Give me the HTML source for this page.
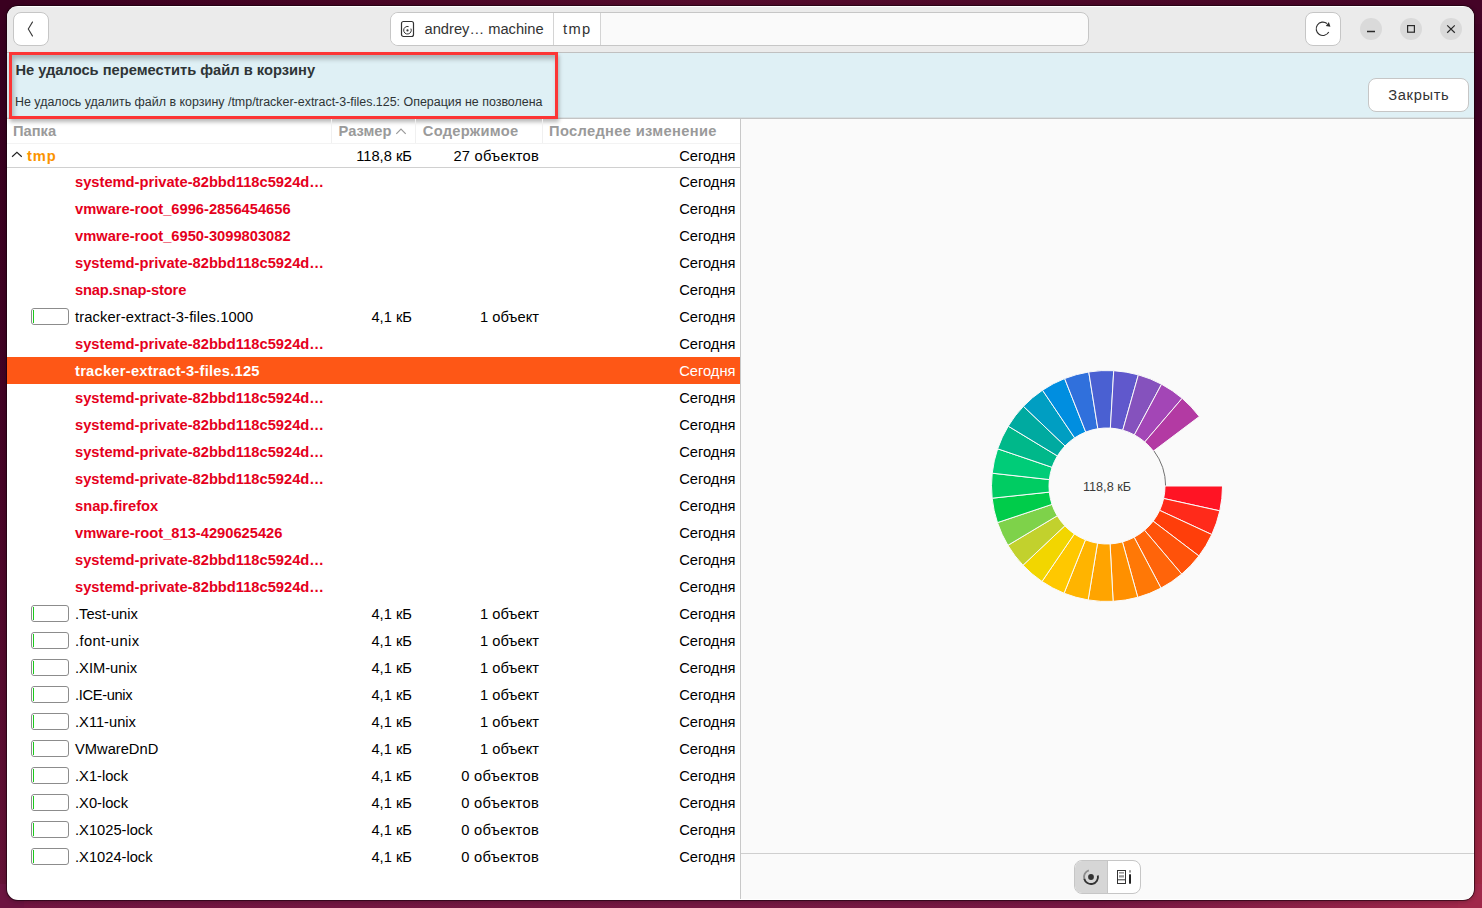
<!DOCTYPE html>
<html><head><meta charset="utf-8">
<style>
*{box-sizing:border-box}
html,body{margin:0;padding:0}
body{width:1482px;height:908px;overflow:hidden;position:relative;font-family:"Liberation Sans",sans-serif;
background:#460426}
.bg{position:absolute}
#win{position:absolute;left:7px;top:6px;width:1467px;height:894px;border-radius:11px;overflow:hidden;background:#fff;box-shadow:0 0 0 1px rgba(20,0,10,0.55),0 1px 4px 1px rgba(0,0,0,0.22)}
#pg{position:absolute;left:-7px;top:-6px;width:1482px;height:908px}
.a{position:absolute}
.t{position:absolute;white-space:nowrap;font-size:14.7px;line-height:17px;color:#000}
.red{color:#e5001c;font-weight:bold}
.sel{color:#fff;font-weight:bold}
.gh{color:#9a9a9a;font-weight:bold}
.btn{position:absolute;background:#fff;border:1px solid #c6c6c6;border-radius:8px}
.wc{position:absolute;width:22px;height:22px;border-radius:50%;background:#dadada}
.pb{position:absolute;left:31px;width:38px;height:17px;border:1px solid #8c8c8c;border-radius:3px;background:#fff}
.pb i{position:absolute;left:1px;top:1px;width:1px;height:13px;background:#1cc81c}
</style></head><body>
<div class="bg" style="left:0;top:0;width:1482px;height:7px;background:linear-gradient(90deg,#3a0020 0%,#460424 20%,#540b2c 47%,#4c0828 74%,#450427 100%)"></div>
<div class="bg" style="left:0;top:899px;width:1482px;height:9px;background:linear-gradient(90deg,#711540 0%,#751942 47%,#771843 74%,#a0284a 100%)"></div>
<div class="bg" style="left:0;top:0;width:8px;height:908px;background:linear-gradient(180deg,#3a0020 0%,#36001e 11%,#460426 53%,#641236 97%,#711540 100%)"></div>
<div class="bg" style="left:1474px;top:0;width:8px;height:908px;background:linear-gradient(180deg,#450427 0%,#3b0022 11%,#741538 53%,#9e2742 97%,#a0284a 100%)"></div>
<div class="bg" style="left:0;top:0;width:24px;height:24px;background:#3a0020"></div>
<div class="bg" style="left:1458px;top:0;width:24px;height:24px;background:#450427"></div>
<div class="bg" style="left:0;top:884px;width:24px;height:24px;background:#6c1440"></div>
<div class="bg" style="left:1458px;top:884px;width:24px;height:24px;background:#a0284a"></div>
<div id="win"><div id="pg">

<div class="a" style="left:0;top:7px;width:1482px;height:45px;background:#ebebeb"></div>
<div class="a" style="left:0;top:52px;width:1482px;height:1px;background:#c0c0c0"></div>
<div class="btn" style="left:13px;top:12px;width:36px;height:34px"></div>
<svg class="a" style="left:0;top:0" width="60" height="60"><path d="M32.7 21.6 L28.3 29 L32.7 36.4" fill="none" stroke="#3c3c3c" stroke-width="1.1"/></svg>
<div class="btn" style="left:390px;top:12px;width:699px;height:34px;background:#fafafa;overflow:hidden"><div class="a" style="left:0;top:0;width:210px;height:34px;background:#fff;border-right:1px solid #d4d4d4"></div><div class="a" style="left:162px;top:0;width:1px;height:34px;background:#d4d4d4"></div></div>
<svg class="a" style="left:400px;top:20px" width="16" height="18"><rect x="1.5" y="1.5" width="12" height="15" rx="2" fill="none" stroke="#333" stroke-width="1.2"/><path d="M10.9 8.6 A3.8 3.8 0 1 1 8.6 6.6" fill="none" stroke="#333" stroke-width="1"/><circle cx="7.5" cy="10.4" r="1.1" fill="#333"/></svg>
<div class="t " style="left:424.5px;top:21px;color:#333">andrey… machine</div>
<div class="t " style="left:563px;top:21px;color:#333;letter-spacing:1.3px">tmp</div>
<div class="btn" style="left:1305px;top:12px;width:36px;height:34px"></div>
<svg class="a" style="left:1310px;top:17px" width="26" height="24"><path d="M18.76 15.05 A6.7 6.7 0 1 1 17.0 6.5" fill="none" stroke="#2e2e2e" stroke-width="1.15"/><path d="M15.8 8.9 L18.9 5.0 L20.4 9.7 Z" fill="#2e2e2e"/></svg>
<div class="wc" style="left:1360px;top:18px"></div>
<div class="wc" style="left:1400px;top:18px"></div>
<div class="wc" style="left:1440px;top:18px"></div>
<svg class="a" style="left:1360px;top:18px" width="102" height="22"><path d="M7 13.5 H15" stroke="#2a2a2a" stroke-width="1.3"/><rect x="47.6" y="7.6" width="6.8" height="6.6" fill="none" stroke="#2a2a2a" stroke-width="1.2"/><path d="M87.2 7.4 L94.8 14.8 M94.8 7.4 L87.2 14.8" stroke="#2a2a2a" stroke-width="1.2"/></svg>
<div class="a" style="left:0;top:53px;width:1482px;height:65px;background:#dff0f5"></div>
<div class="a" style="left:0;top:118px;width:1482px;height:1px;background:#c4c4c4"></div>
<div class="a" style="left:0;top:117px;width:1482px;height:1px;background:#d6e0e3"></div>
<div class="t " style="left:15.4px;top:62px;font-weight:bold;color:#2e3436">Не удалось переместить файл в корзину</div>
<div class="t" style="left:15px;top:95px;font-size:12.45px;line-height:14px;color:#2e3436">Не удалось удалить файл в корзину /tmp/tracker-extract-3-files.125: Операция не позволена</div>
<div class="btn" style="left:1368px;top:78px;width:101px;height:34px"></div>
<div class="t" style="left:1368px;top:87px;width:101px;text-align:center;color:#333;letter-spacing:0.65px;text-indent:0.65px">Закрыть</div>
<div class="a" style="left:9px;top:52px;width:549px;height:67px;border:3px solid #fc3535;box-shadow:inset 2px 4px 5px rgba(0,0,0,0.25), 1px 3px 4px rgba(0,0,0,0.28)"></div>
<div class="a" style="left:740px;top:119px;width:1px;height:780px;background:#c8c8c8"></div>
<div class="a" style="left:741px;top:119px;width:732px;height:780px;background:#fafafa"></div>
<div class="t gh" style="left:13px;top:123px;">Папка</div>
<div class="t gh" style="left:338.6px;top:123px;">Размер</div>
<svg class="a" style="left:394px;top:124px" width="14" height="12"><path d="M2.3 9.8 L7 5 L11.7 9.8" fill="none" stroke="#9a9a9a" stroke-width="1.2"/></svg>
<div class="t gh" style="left:422.8px;top:123px;letter-spacing:0.28px">Содержимое</div>
<div class="t gh" style="left:549px;top:123px;letter-spacing:0.33px">Последнее изменение</div>
<div class="a" style="left:331px;top:119px;width:1px;height:24px;background:#f0f0f0"></div>
<div class="a" style="left:415px;top:119px;width:1px;height:24px;background:#f0f0f0"></div>
<div class="a" style="left:542px;top:119px;width:1px;height:24px;background:#f0f0f0"></div>
<div class="a" style="left:7px;top:143px;width:733px;height:1px;background:#f3f3f3"></div>
<svg class="a" style="left:8px;top:148px" width="18" height="14"><path d="M4.06 8.75 L8.92 4.3 L13.78 8.75" fill="none" stroke="#222" stroke-width="1.15"/></svg>
<div class="t " style="left:27px;top:148px;color:#fb9400;font-weight:bold;letter-spacing:0.9px">tmp</div>
<div class="t " style="right:1070px;top:148px;">118,8 кБ</div>
<div class="t " style="right:943px;top:148px;letter-spacing:0.24px">27 объектов</div>
<div class="t " style="right:746.5px;top:148px;">Сегодня</div>
<div class="a" style="left:7px;top:167px;width:733px;height:1px;background:#d0d0d0"></div>
<div class="t red" style="left:75px;top:173.5px;">systemd-private-82bbd118c5924d…</div>
<div class="t " style="right:746.5px;top:173.5px;">Сегодня</div>
<div class="t red" style="left:75px;top:200.5px;">vmware-root_6996-2856454656</div>
<div class="t " style="right:746.5px;top:200.5px;">Сегодня</div>
<div class="t red" style="left:75px;top:227.5px;">vmware-root_6950-3099803082</div>
<div class="t " style="right:746.5px;top:227.5px;">Сегодня</div>
<div class="t red" style="left:75px;top:254.5px;">systemd-private-82bbd118c5924d…</div>
<div class="t " style="right:746.5px;top:254.5px;">Сегодня</div>
<div class="t red" style="left:75px;top:281.5px;letter-spacing:-0.15px">snap.snap-store</div>
<div class="t " style="right:746.5px;top:281.5px;">Сегодня</div>
<div class="pb" style="top:308px"><i></i></div>
<div class="t " style="right:1070px;top:308.5px;">4,1 кБ</div>
<div class="t " style="right:943px;top:308.5px;">1 объект</div>
<div class="t " style="left:75px;top:308.5px;letter-spacing:0.13px">tracker-extract-3-files.1000</div>
<div class="t " style="right:746.5px;top:308.5px;">Сегодня</div>
<div class="t red" style="left:75px;top:335.5px;">systemd-private-82bbd118c5924d…</div>
<div class="t " style="right:746.5px;top:335.5px;">Сегодня</div>
<div class="a" style="left:7px;top:357px;width:733px;height:27px;background:#fe5716"></div>
<div class="t sel" style="left:75px;top:362.5px;letter-spacing:0.25px">tracker-extract-3-files.125</div>
<div class="t " style="right:746.5px;top:362.5px;color:#fff">Сегодня</div>
<div class="t red" style="left:75px;top:389.5px;">systemd-private-82bbd118c5924d…</div>
<div class="t " style="right:746.5px;top:389.5px;">Сегодня</div>
<div class="t red" style="left:75px;top:416.5px;">systemd-private-82bbd118c5924d…</div>
<div class="t " style="right:746.5px;top:416.5px;">Сегодня</div>
<div class="t red" style="left:75px;top:443.5px;">systemd-private-82bbd118c5924d…</div>
<div class="t " style="right:746.5px;top:443.5px;">Сегодня</div>
<div class="t red" style="left:75px;top:470.5px;">systemd-private-82bbd118c5924d…</div>
<div class="t " style="right:746.5px;top:470.5px;">Сегодня</div>
<div class="t red" style="left:75px;top:497.5px;">snap.firefox</div>
<div class="t " style="right:746.5px;top:497.5px;">Сегодня</div>
<div class="t red" style="left:75px;top:524.5px;">vmware-root_813-4290625426</div>
<div class="t " style="right:746.5px;top:524.5px;">Сегодня</div>
<div class="t red" style="left:75px;top:551.5px;">systemd-private-82bbd118c5924d…</div>
<div class="t " style="right:746.5px;top:551.5px;">Сегодня</div>
<div class="t red" style="left:75px;top:578.5px;">systemd-private-82bbd118c5924d…</div>
<div class="t " style="right:746.5px;top:578.5px;">Сегодня</div>
<div class="pb" style="top:605px"><i></i></div>
<div class="t " style="right:1070px;top:605.5px;">4,1 кБ</div>
<div class="t " style="right:943px;top:605.5px;">1 объект</div>
<div class="t " style="left:75px;top:605.5px;">.Test-unix</div>
<div class="t " style="right:746.5px;top:605.5px;">Сегодня</div>
<div class="pb" style="top:632px"><i></i></div>
<div class="t " style="right:1070px;top:632.5px;">4,1 кБ</div>
<div class="t " style="right:943px;top:632.5px;">1 объект</div>
<div class="t " style="left:75px;top:632.5px;letter-spacing:0.4px">.font-unix</div>
<div class="t " style="right:746.5px;top:632.5px;">Сегодня</div>
<div class="pb" style="top:659px"><i></i></div>
<div class="t " style="right:1070px;top:659.5px;">4,1 кБ</div>
<div class="t " style="right:943px;top:659.5px;">1 объект</div>
<div class="t " style="left:75px;top:659.5px;">.XIM-unix</div>
<div class="t " style="right:746.5px;top:659.5px;">Сегодня</div>
<div class="pb" style="top:686px"><i></i></div>
<div class="t " style="right:1070px;top:686.5px;">4,1 кБ</div>
<div class="t " style="right:943px;top:686.5px;">1 объект</div>
<div class="t " style="left:75px;top:686.5px;letter-spacing:-0.35px">.ICE-unix</div>
<div class="t " style="right:746.5px;top:686.5px;">Сегодня</div>
<div class="pb" style="top:713px"><i></i></div>
<div class="t " style="right:1070px;top:713.5px;">4,1 кБ</div>
<div class="t " style="right:943px;top:713.5px;">1 объект</div>
<div class="t " style="left:75px;top:713.5px;">.X11-unix</div>
<div class="t " style="right:746.5px;top:713.5px;">Сегодня</div>
<div class="pb" style="top:740px"><i></i></div>
<div class="t " style="right:1070px;top:740.5px;">4,1 кБ</div>
<div class="t " style="right:943px;top:740.5px;">1 объект</div>
<div class="t " style="left:75px;top:740.5px;">VMwareDnD</div>
<div class="t " style="right:746.5px;top:740.5px;">Сегодня</div>
<div class="pb" style="top:767px"><i></i></div>
<div class="t " style="right:1070px;top:767.5px;">4,1 кБ</div>
<div class="t " style="right:943px;top:767.5px;letter-spacing:0.3px">0 объектов</div>
<div class="t " style="left:75px;top:767.5px;">.X1-lock</div>
<div class="t " style="right:746.5px;top:767.5px;">Сегодня</div>
<div class="pb" style="top:794px"><i></i></div>
<div class="t " style="right:1070px;top:794.5px;">4,1 кБ</div>
<div class="t " style="right:943px;top:794.5px;letter-spacing:0.3px">0 объектов</div>
<div class="t " style="left:75px;top:794.5px;">.X0-lock</div>
<div class="t " style="right:746.5px;top:794.5px;">Сегодня</div>
<div class="pb" style="top:821px"><i></i></div>
<div class="t " style="right:1070px;top:821.5px;">4,1 кБ</div>
<div class="t " style="right:943px;top:821.5px;letter-spacing:0.3px">0 объектов</div>
<div class="t " style="left:75px;top:821.5px;">.X1025-lock</div>
<div class="t " style="right:746.5px;top:821.5px;">Сегодня</div>
<div class="pb" style="top:848px"><i></i></div>
<div class="t " style="right:1070px;top:848.5px;">4,1 кБ</div>
<div class="t " style="right:943px;top:848.5px;letter-spacing:0.3px">0 объектов</div>
<div class="t " style="left:75px;top:848.5px;">.X1024-lock</div>
<div class="t " style="right:746.5px;top:848.5px;">Сегодня</div>
<svg class="a" style="left:741px;top:118px" width="741" height="735"><path d="M412.82 332.76 A58.6 58.6 0 0 1 424.60 368.00" fill="none" stroke="#707070" stroke-width="1"/><path d="M481.50 368.00 A115.5 115.5 0 0 1 478.80 392.85 L422.64 380.48 A58 58 0 0 0 424.00 368.00 Z" fill="#ff1424" stroke="#fafafa" stroke-width="1"/><path d="M478.80 392.85 A115.5 115.5 0 0 1 470.81 416.54 L418.63 392.37 A58 58 0 0 0 422.64 380.48 Z" fill="#ff2a1a" stroke="#fafafa" stroke-width="1"/><path d="M470.81 416.54 A115.5 115.5 0 0 1 457.91 437.95 L412.15 403.13 A58 58 0 0 0 418.63 392.37 Z" fill="#ff3e0a" stroke="#fafafa" stroke-width="1"/><path d="M457.91 437.95 A115.5 115.5 0 0 1 440.71 456.08 L403.52 412.23 A58 58 0 0 0 412.15 403.13 Z" fill="#ff520a" stroke="#fafafa" stroke-width="1"/><path d="M440.71 456.08 A115.5 115.5 0 0 1 420.01 470.09 L393.12 419.27 A58 58 0 0 0 403.52 412.23 Z" fill="#ff640a" stroke="#fafafa" stroke-width="1"/><path d="M420.01 470.09 A115.5 115.5 0 0 1 396.78 479.32 L381.46 423.90 A58 58 0 0 0 393.12 419.27 Z" fill="#ff7806" stroke="#fafafa" stroke-width="1"/><path d="M396.78 479.32 A115.5 115.5 0 0 1 372.11 483.34 L369.07 425.92 A58 58 0 0 0 381.46 423.90 Z" fill="#ff9000" stroke="#fafafa" stroke-width="1"/><path d="M372.11 483.34 A115.5 115.5 0 0 1 347.15 481.95 L356.53 425.22 A58 58 0 0 0 369.07 425.92 Z" fill="#ffa400" stroke="#fafafa" stroke-width="1"/><path d="M347.15 481.95 A115.5 115.5 0 0 1 323.07 475.23 L344.44 421.85 A58 58 0 0 0 356.53 425.22 Z" fill="#ffb400" stroke="#fafafa" stroke-width="1"/><path d="M323.07 475.23 A115.5 115.5 0 0 1 301.01 463.48 L333.36 415.95 A58 58 0 0 0 344.44 421.85 Z" fill="#ffc800" stroke="#fafafa" stroke-width="1"/><path d="M301.01 463.48 A115.5 115.5 0 0 1 281.99 447.26 L323.81 407.80 A58 58 0 0 0 333.36 415.95 Z" fill="#f2d600" stroke="#fafafa" stroke-width="1"/><path d="M281.99 447.26 A115.5 115.5 0 0 1 266.90 427.33 L316.24 397.79 A58 58 0 0 0 323.81 407.80 Z" fill="#c2d12d" stroke="#fafafa" stroke-width="1"/><path d="M266.90 427.33 A115.5 115.5 0 0 1 256.46 404.62 L310.99 386.39 A58 58 0 0 0 316.24 397.79 Z" fill="#7ed24a" stroke="#fafafa" stroke-width="1"/><path d="M256.46 404.62 A115.5 115.5 0 0 1 251.15 380.19 L308.32 374.12 A58 58 0 0 0 310.99 386.39 Z" fill="#00cc4a" stroke="#fafafa" stroke-width="1"/><path d="M251.15 380.19 A115.5 115.5 0 0 1 251.21 355.20 L308.36 361.57 A58 58 0 0 0 308.32 374.12 Z" fill="#00cc62" stroke="#fafafa" stroke-width="1"/><path d="M251.21 355.20 A115.5 115.5 0 0 1 256.65 330.80 L311.09 349.32 A58 58 0 0 0 308.36 361.57 Z" fill="#00cc78" stroke="#fafafa" stroke-width="1"/><path d="M256.65 330.80 A115.5 115.5 0 0 1 267.22 308.15 L316.40 337.94 A58 58 0 0 0 311.09 349.32 Z" fill="#00b88a" stroke="#fafafa" stroke-width="1"/><path d="M267.22 308.15 A115.5 115.5 0 0 1 282.41 288.30 L324.02 327.98 A58 58 0 0 0 316.40 337.94 Z" fill="#00aaa0" stroke="#fafafa" stroke-width="1"/><path d="M282.41 288.30 A115.5 115.5 0 0 1 301.51 272.18 L333.62 319.88 A58 58 0 0 0 324.02 327.98 Z" fill="#009ec2" stroke="#fafafa" stroke-width="1"/><path d="M301.51 272.18 A115.5 115.5 0 0 1 323.64 260.55 L344.73 314.04 A58 58 0 0 0 333.62 319.88 Z" fill="#008ee0" stroke="#fafafa" stroke-width="1"/><path d="M323.64 260.55 A115.5 115.5 0 0 1 347.75 253.95 L356.84 310.73 A58 58 0 0 0 344.73 314.04 Z" fill="#3070dc" stroke="#fafafa" stroke-width="1"/><path d="M347.75 253.95 A115.5 115.5 0 0 1 372.72 252.70 L369.37 310.10 A58 58 0 0 0 356.84 310.73 Z" fill="#4a60d2" stroke="#fafafa" stroke-width="1"/><path d="M372.72 252.70 A115.5 115.5 0 0 1 397.37 256.84 L381.75 312.18 A58 58 0 0 0 369.37 310.10 Z" fill="#6058cc" stroke="#fafafa" stroke-width="1"/><path d="M397.37 256.84 A115.5 115.5 0 0 1 420.55 266.19 L393.39 316.88 A58 58 0 0 0 381.75 312.18 Z" fill="#8552bd" stroke="#fafafa" stroke-width="1"/><path d="M420.55 266.19 A115.5 115.5 0 0 1 441.17 280.31 L403.75 323.97 A58 58 0 0 0 393.39 316.88 Z" fill="#a346b6" stroke="#fafafa" stroke-width="1"/><path d="M441.17 280.31 A115.5 115.5 0 0 1 458.28 298.54 L412.34 333.12 A58 58 0 0 0 403.75 323.97 Z" fill="#b33aa3" stroke="#fafafa" stroke-width="1"/><circle cx="366" cy="368" r="57.5" fill="#fafafa"/></svg>
<div class="t" style="left:1047px;top:480px;width:120px;text-align:center;font-size:12.7px;line-height:14px;color:#3a3a3a">118,8 кБ</div>
<div class="a" style="left:741px;top:853px;width:741px;height:1px;background:#cfcfcf"></div>
<div class="btn" style="left:1074px;top:860px;width:67px;height:34px;overflow:hidden"><div class="a" style="left:0;top:0;width:33px;height:34px;background:#d6d6d6;border-right:1px solid #c6c6c6"></div></div>
<svg class="a" style="left:1074px;top:860px" width="67" height="34"><path d="M10.24 18.81 A7 7 0 0 1 14.84 10.34" fill="none" stroke="#8c8c8c" stroke-width="1.9"/><path d="M23.85 15.54 A7 7 0 0 1 10.24 18.81" fill="none" stroke="#333" stroke-width="1.9"/><circle cx="17" cy="17" r="2.9" fill="#333"/><rect x="43.5" y="10.5" width="8" height="13" fill="none" stroke="#333" stroke-width="1"/><rect x="45" y="12" width="5" height="1.6" fill="#999"/><rect x="45" y="15.2" width="5" height="2.3" fill="#999"/><path d="M43.5 19.8 H51.5" stroke="#333" stroke-width="1"/><rect x="55" y="10.2" width="2" height="2.4" fill="#999"/><rect x="55" y="14.3" width="2" height="9.4" fill="#222"/></svg>
</div></div></body></html>
